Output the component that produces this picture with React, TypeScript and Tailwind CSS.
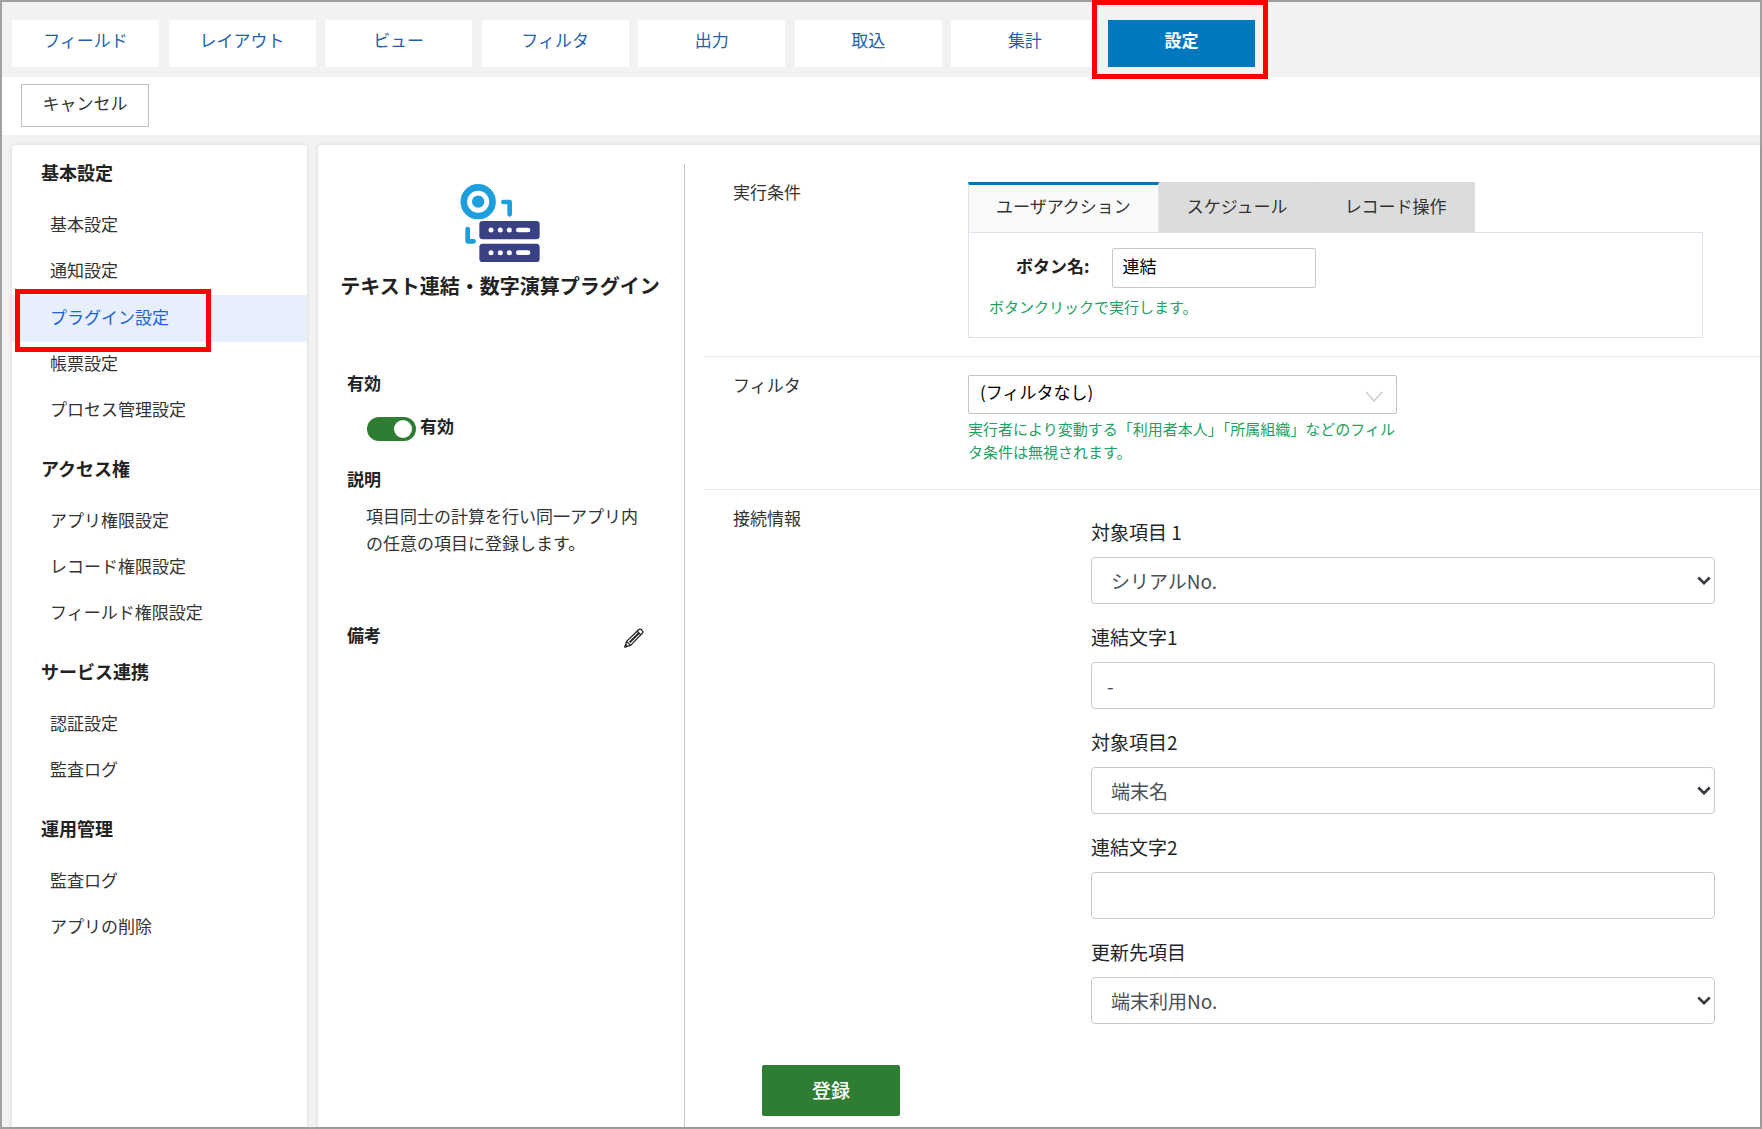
import React, { useState } from "react";

const topTabs = ["フィールド", "レイアウト", "ビュー", "フィルタ", "出力", "取込", "集計", "設定"];

const menu = [
  { title: "基本設定", items: ["基本設定", "通知設定", "プラグイン設定", "帳票設定", "プロセス管理設定"] },
  { title: "アクセス権", items: ["アプリ権限設定", "レコード権限設定", "フィールド権限設定"] },
  { title: "サービス連携", items: ["認証設定", "監査ログ"] },
  { title: "運用管理", items: ["監査ログ", "アプリの削除"] },
];

type Field = { id: string; label: string; kind: "select" | "text"; value: string };

const fields: Field[] = [
  { id: "target1", label: "対象項目 1", kind: "select", value: "シリアルNo." },
  { id: "joint1", label: "連結文字1", kind: "text", value: "-" },
  { id: "target2", label: "対象項目2", kind: "select", value: "端末名" },
  { id: "joint2", label: "連結文字2", kind: "text", value: "" },
  { id: "update", label: "更新先項目", kind: "select", value: "端末利用No." },
];

function Highlight({ className }: { className: string }) {
  return <span aria-hidden="true" className={`pointer-events-none absolute z-10 border-5 border-[#ff0000] ${className}`} />;
}

function TopNav() {
  return (
    <nav className="bg-[#f2f2f2] px-[10px] pt-[18px] pb-[10px]">
      <div className="flex w-full max-w-[1243px] justify-between">
        {topTabs.map((tab) =>
          tab === "設定" ? (
            <button key={tab} type="button" className="relative h-[47px] w-[147px] bg-[#0078bf] pb-[7px] font-bold text-white">
              {tab}
              <Highlight className="-top-[20px] -left-[16px] h-[79px] w-[176px]" />
            </button>
          ) : (
            <button key={tab} type="button" className="h-[47px] w-[147px] bg-white pb-2 text-[#1f5fae]">
              {tab}
            </button>
          ),
        )}
      </div>
    </nav>
  );
}

function Sidebar() {
  return (
    <aside className="w-[295px] shrink-0 rounded-t-[3px] bg-white pt-[11px] shadow-[0_0_4px_rgba(0,0,0,0.12)]">
      {menu.map((group) => (
        <section key={group.title} className="mb-[18px]">
          <h2 className="mb-[15px] pl-[29px] text-[18px] leading-8 font-bold text-[#222]">{group.title}</h2>
          <ul>
            {group.items.map((item) =>
              item === "プラグイン設定" ? (
                <li key={item} className="relative">
                  <a href="#" className="flex h-[47px] items-center bg-[#e8effc] pb-1 pl-[38px] text-[#1a63d8]">
                    {item}
                  </a>
                  <Highlight className="-top-[6px] left-[3px] h-[63px] w-[196px]" />
                </li>
              ) : (
                <li key={item}>
                  <a href="#" className="flex h-[46px] items-center pb-1 pl-[38px]">
                    {item}
                  </a>
                </li>
              ),
            )}
          </ul>
        </section>
      ))}
    </aside>
  );
}

function PluginIcon() {
  return (
    <svg viewBox="60 42 240 234" className="h-[78px] w-[80px]" aria-hidden="true">
      <circle cx="114.500" cy="95" r="43" fill="none" stroke="#1c9fdc" strokeWidth="20" />
      <circle cx="114.500" cy="95" r="18.500" fill="#1c9fdc" />
      <path d="M190 96h19v37" fill="none" stroke="#1c9fdc" strokeWidth="14" strokeLinecap="round" strokeLinejoin="round" />
      <path d="M83 177v37h18" fill="none" stroke="#1c9fdc" strokeWidth="14" strokeLinecap="round" strokeLinejoin="round" />
      {[153, 221].map((y) => (
        <g key={y}>
          <rect x="118" y={y} width="181" height="55" rx="10" fill="#3a4183" />
          <g fill="#fff">
            <circle cx="153" cy={y + 27} r="7.500" />
            <circle cx="181" cy={y + 27} r="7.500" />
            <circle cx="208" cy={y + 27} r="7.500" />
            <rect x="228" y={y + 20} width="43" height="14" rx="7" />
          </g>
        </g>
      ))}
    </svg>
  );
}

function PencilIcon() {
  return (
    <svg viewBox="0 0 20 20" className="h-5 w-5" fill="none" stroke="#222" strokeWidth="1.300" strokeLinejoin="round" aria-hidden="true">
      <path d="M1 19l1.600-5.600L14.600 1.800c.8-.8 2-.8 2.800 0l.8.800c.8.8.8 2 0 2.800L6.600 17.400z" />
      <path d="M5.600 14.400L14.800 5.200" strokeWidth="2" />
      <path d="M13.200 3.200l3.600 3.600M2.600 13.400l4 4" />
      <path d="M1 19l.7-2.200 1.500 1.500z" fill="#222" />
    </svg>
  );
}

function PluginSummary() {
  const [enabled, setEnabled] = useState(true);
  return (
    <section className="w-[366px] shrink-0 pt-[39px]">
      <div className="flex flex-col items-center pr-[2px]">
        <PluginIcon />
        <h1 className="mt-2 text-[20px] leading-8 font-bold whitespace-nowrap text-[#222]">テキスト連結・数字演算プラグイン</h1>
      </div>
      <div className="mt-[65px] pr-[40px] pl-[29px]">
        <h2 className="leading-8 font-bold text-[#222]">有効</h2>
        <label className="mt-[14px] ml-5 flex h-8 items-center gap-1 font-bold text-[#222]">
          <input type="checkbox" role="switch" checked={enabled} onChange={() => setEnabled(!enabled)} className="peer sr-only" />
          <span className="flex h-6 w-[49px] items-center justify-start rounded-full bg-gray-400 px-1 peer-checked:justify-end peer-checked:bg-[#2e7d32]">
            <span className="h-[18px] w-[18px] rounded-full bg-white" />
          </span>
          <span className="pb-[6px]">有効</span>
        </label>
        <h2 className="mt-[18px] leading-8 font-bold text-[#222]">説明</h2>
        <p className="mt-[7px] ml-[19px] leading-[27px]">
          項目同士の計算を行い同一アプリ内の任意の項目に登録します。
        </p>
        <div className="mt-[63px] flex items-center justify-between">
          <h2 className="leading-8 font-bold text-[#222]">備考</h2>
          <button type="button" aria-label="備考を編集" className="pt-[6px]">
            <PencilIcon />
          </button>
        </div>
      </div>
    </section>
  );
}

function ConditionSection() {
  return (
    <section className="flex h-[193px] border-b border-[#e6e8ea] pt-[18px] pl-[29px]">
      <h2 className="w-[235px] shrink-0 leading-5">実行条件</h2>
      <div className="mr-[57px] min-w-0 flex-1">
        <div role="tablist" className="flex h-[50px]">
          <button role="tab" aria-selected="true" type="button" className="border-x border-t-3 border-x-[#dde2ea] border-t-[#0075be] bg-[#fafafa] px-[27px] pb-[5px]">
            ユーザアクション
          </button>
          <button role="tab" aria-selected="false" type="button" className="border-r border-r-[#d8dade] bg-[#dcdcdc] px-[28px] pb-[2px]">
            スケジュール
          </button>
          <button role="tab" aria-selected="false" type="button" className="bg-[#dcdcdc] px-[28px] pb-[2px]">
            レコード操作
          </button>
        </div>
        <div className="h-[106px] border border-[#dde1e9] pt-[15px] pl-5">
          <div className="flex items-center gap-[22px] pl-[27px]">
            <label htmlFor="button-name" className="pb-1 font-bold text-[#222]">
              ボタン名:
            </label>
            <input id="button-name" type="text" defaultValue="連結" className="h-10 w-[204px] rounded-[2px] border border-[#c8c8c8] px-[10px] pb-[5px] text-black" />
          </div>
          <p className="mt-[7px] text-[15px] leading-6 text-[#22a063]">ボタンクリックで実行します。</p>
        </div>
      </div>
    </section>
  );
}

function FilterSection() {
  return (
    <section className="flex h-[133px] border-b border-[#e6e8ea] pt-[18px] pl-[29px]">
      <label htmlFor="filter" className="w-[235px] shrink-0 leading-5">
        フィルタ
      </label>
      <div className="w-[429px]">
        <div className="relative">
          <select id="filter" className="block h-[39px] w-full appearance-none rounded-[2px] border border-[#c4c4c4] px-[11px] pb-[5px] text-black">
            <option>(フィルタなし)</option>
          </select>
          <svg viewBox="0 0 18 11" className="pointer-events-none absolute top-4 right-[14px] h-[11px] w-[18px]" fill="none" stroke="#ccc" strokeWidth="1.500" aria-hidden="true">
            <path d="M1 1l8 9 8-9" />
          </svg>
        </div>
        <p className="mt-[3px] text-[15px] leading-[23px] whitespace-nowrap text-[#22a063]">
          実行者により変動する「利用者本人」「所属組織」などのフィル
          <br />
          タ条件は無視されます。
        </p>
      </div>
    </section>
  );
}

function ConnectionSection() {
  return (
    <section className="flex pt-[18px] pl-[29px]">
      <h2 className="w-[358px] shrink-0 leading-5">接続情報</h2>
      <div className="mr-[45px] min-w-0 flex-1 pt-3 text-[19px]">
        {fields.map((field) => (
          <div key={field.id} className="mb-[21px] last:mb-0">
            <label htmlFor={field.id} className="mb-[13px] block leading-6 text-[#212529]">
              {field.label}
            </label>
            {field.kind === "select" ? (
              <div className="relative">
                <select id={field.id} className="block h-[47px] w-full appearance-none rounded-[4px] border border-[#c4cad2] pl-[19px] text-[#495057]">
                  <option>{field.value}</option>
                </select>
                <svg viewBox="0 0 14 9" className="pointer-events-none absolute top-[19px] right-1 h-[9px] w-[14px]" fill="none" stroke="#343a40" strokeWidth="2.600" aria-hidden="true">
                  <path d="M1.300 1.500L7 7.200l5.700-5.700" />
                </svg>
              </div>
            ) : (
              <input id={field.id} type="text" defaultValue={field.value} className="block h-[47px] w-full rounded-[4px] border border-[#c4cad2] px-[15px] text-[#495057]" />
            )}
          </div>
        ))}
      </div>
    </section>
  );
}

export default function App() {
  return (
    <div
      lang="ja"
      className="flex min-h-screen flex-col border-2 border-[#a0a0a0] bg-[#f2f2f2] font-['Noto_Sans_CJK_JP',sans-serif] text-[17px] leading-6 text-[#333]"
    >
      <TopNav />
      <div className="bg-white px-[19px] pt-[7px] pb-2">
        <button type="button" className="h-[43px] w-[128px] border border-[#bfbfbf] bg-white pb-[6px] text-[#333]">
          キャンセル
        </button>
      </div>
      <div className="flex flex-1 gap-[11px] pt-[10px] pl-[10px]">
        <Sidebar />
        <main className="flex min-w-0 flex-1 rounded-tl-[3px] bg-white shadow-[0_0_4px_rgba(0,0,0,0.12)]">
          <PluginSummary />
          <div className="mt-[19px] min-w-0 flex-1 border-l border-[#c4c4c4] pl-[19px]">
            <ConditionSection />
            <FilterSection />
            <ConnectionSection />
            <button type="button" className="mt-[41px] mb-2 ml-[58px] h-[51px] w-[138px] rounded-[2px] bg-[#2e7d32] pb-[2px] text-[19px] font-medium text-white">
              登録
            </button>
          </div>
        </main>
      </div>
    </div>
  );
}
